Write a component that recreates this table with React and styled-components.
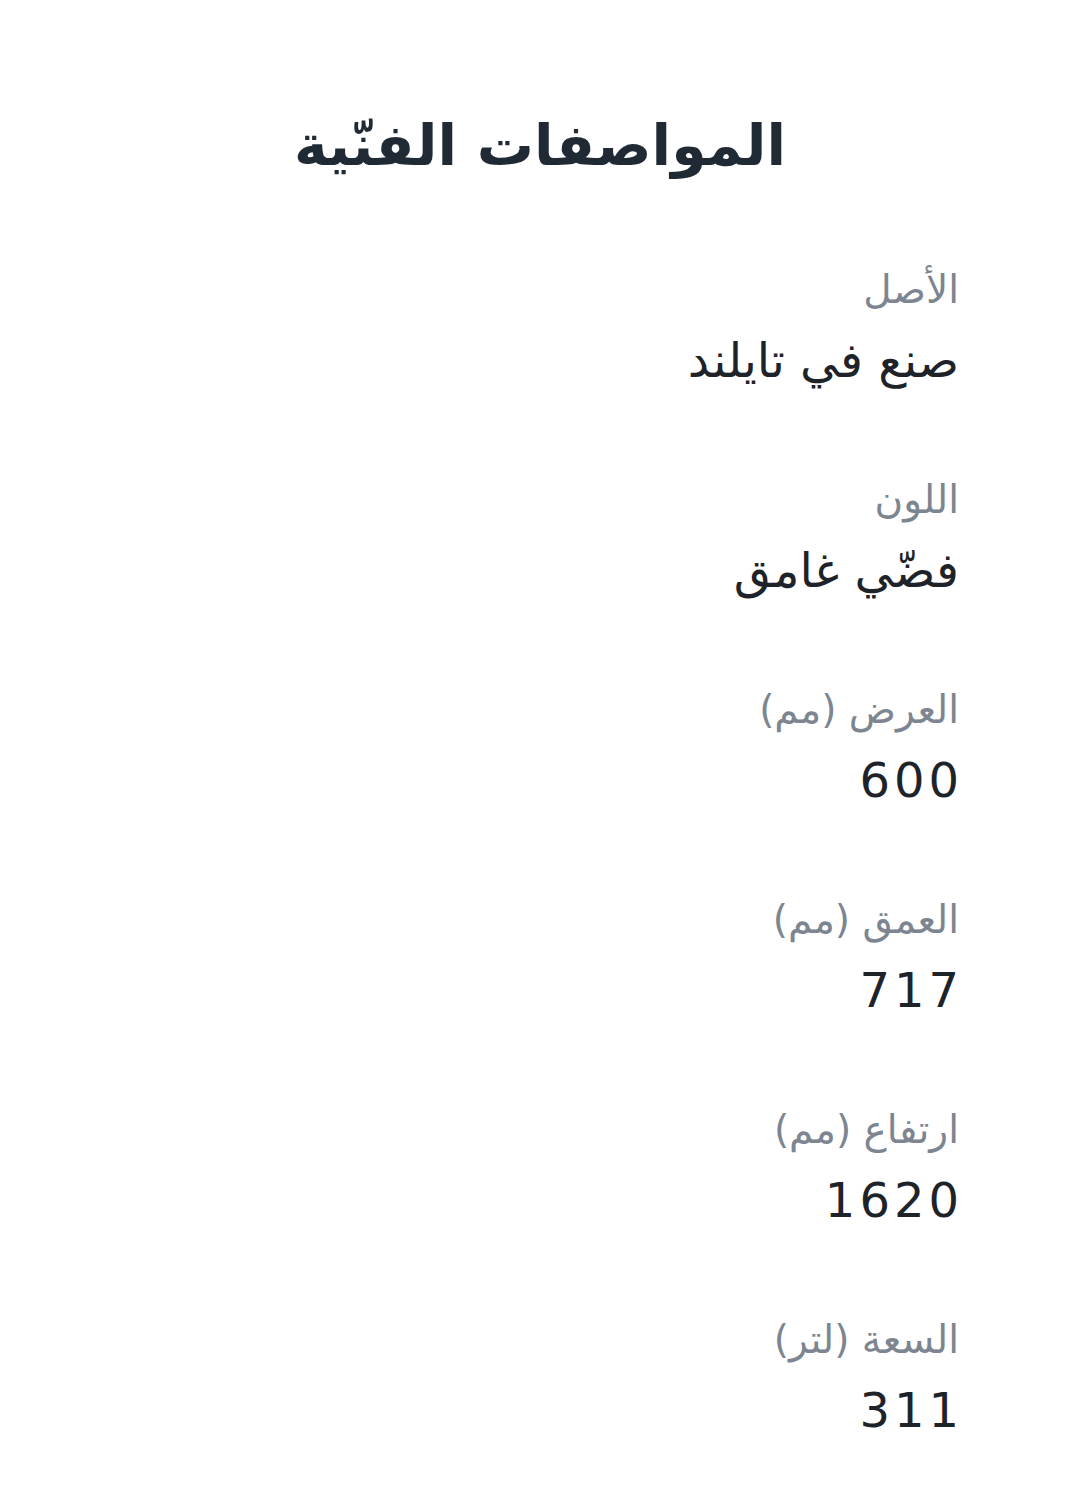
import styled, { createGlobalStyle } from "styled-components";

const GlobalStyle = createGlobalStyle`
  body {
    margin: 0;
    background: #ffffff;
    font-family: "DejaVu Sans", "Noto Sans", sans-serif;
  }
`;

const Page = styled.div`
  direction: rtl;
  padding: 95px 121px 40px 121px;
  display: flex;
  flex-direction: column;
`;

const Title = styled.h1`
  margin: 0 0 65px 0;
  text-align: center;
  font-size: 57px;
  line-height: 100px;
  font-weight: bold;
  color: #1f2a35;
`;

const SpecList = styled.dl`
  margin: 0;
  display: flex;
  flex-direction: column;
  gap: 70px;
`;

const SpecItem = styled.div`
  display: flex;
  flex-direction: column;
`;

const Label = styled.dt`
  font-size: 39px;
  line-height: 60px;
  color: #7c8590;
`;

const Value = styled.dd`
  margin: 0;
  margin-right: ${(p) => (p.$numeric ? "-4px" : "0")};
  font-size: 48px;
  line-height: 80px;
  color: #1e2329;
  letter-spacing: ${(p) => (p.$numeric ? "4px" : "normal")};
`;

const specs = [
  { label: "الأصل", value: "صنع في تايلند" },
  { label: "اللون", value: "فضّي غامق" },
  { label: "العرض (مم)", value: "600" },
  { label: "العمق (مم)", value: "717" },
  { label: "ارتفاع (مم)", value: "1620" },
  { label: "السعة (لتر)", value: "311" },
];

const App = () => {
  return (
    <Page>
      <GlobalStyle />
      <Title>المواصفات الفنّية</Title>
      <SpecList>
        {specs.map((s) => (
          <SpecItem key={s.label}>
            <Label>{s.label}</Label>
            <Value $numeric={/^\d+$/.test(s.value)}>{s.value}</Value>
          </SpecItem>
        ))}
      </SpecList>
    </Page>
  );
};

export default App;
